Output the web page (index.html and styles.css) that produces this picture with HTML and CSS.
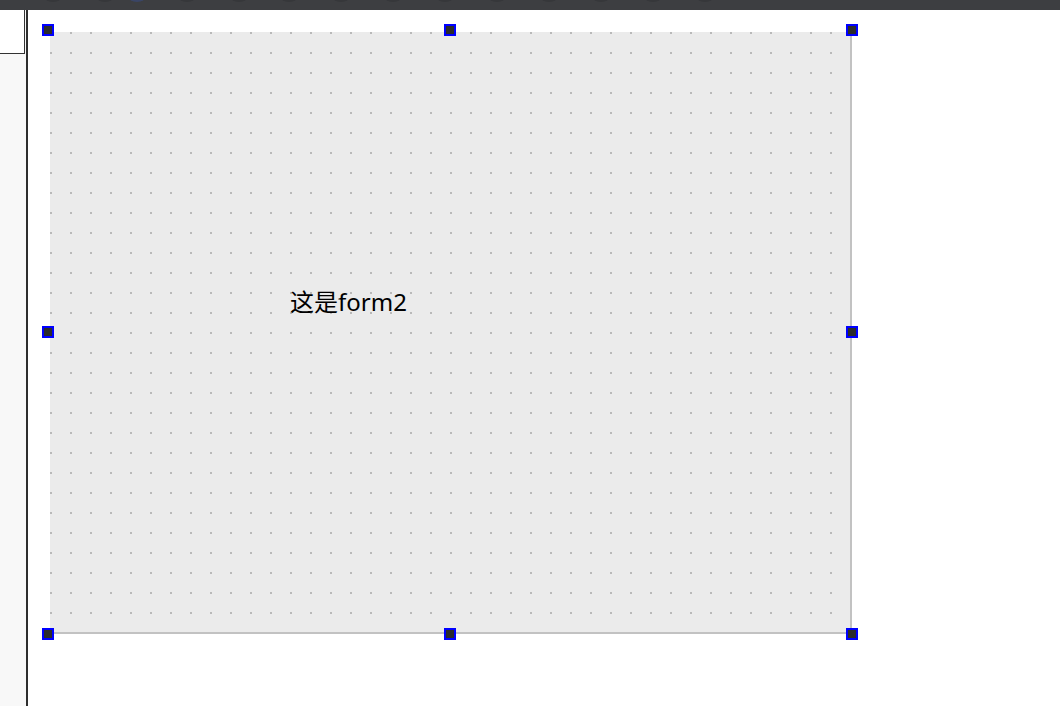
FILE: index.html
```html
<!DOCTYPE html>
<html lang="zh">
<head>
<meta charset="utf-8">
<title>form2</title>
<link rel="stylesheet" href="styles.css">
</head>
<body>
<div class="topbar">
  <span class="tb-icon" style="left:44px"></span>
  <span class="tb-icon" style="left:96px"></span>
  <span class="tb-icon blue" style="left:128px"></span>
  <span class="tb-icon" style="left:178px"></span>
  <span class="tb-icon" style="left:230px"></span>
  <span class="tb-icon" style="left:280px"></span>
  <span class="tb-icon" style="left:332px"></span>
  <span class="tb-icon" style="left:384px"></span>
  <span class="tb-icon" style="left:436px"></span>
  <span class="tb-icon" style="left:488px"></span>
  <span class="tb-icon" style="left:540px"></span>
  <span class="tb-icon" style="left:592px"></span>
  <span class="tb-icon" style="left:644px"></span>
  <span class="tb-icon" style="left:696px"></span>
</div>
<div class="main">
  <aside class="side">
    <div class="side-box"></div>
    <div class="side-rest"></div>
  </aside>
  <section class="canvas">
    <div class="selection">
      <div class="form">
        <div class="label">这是form2</div>
      </div>
      <span class="handle h-tl"></span>
      <span class="handle h-tc"></span>
      <span class="handle h-tr"></span>
      <span class="handle h-ml"></span>
      <span class="handle h-mr"></span>
      <span class="handle h-bl"></span>
      <span class="handle h-bc"></span>
      <span class="handle h-br"></span>
    </div>
  </section>
</div>
</body>
</html>
```

FILE: styles.css
```css
html, body {
  margin: 0;
  padding: 0;
  width: 1060px;
  height: 706px;
  overflow: hidden;
  background: #ffffff;
  font-family: "Noto Sans", "Noto Sans CJK SC", sans-serif;
}

.topbar {
  position: relative;
  height: 10px;
  background: #3d3e41;
  overflow: hidden;
}

.tb-icon {
  position: absolute;
  top: -10px;
  width: 18px;
  height: 12px;
  border-radius: 50%;
  background: #36373a;
}

.tb-icon.blue {
  background: #3a4566;
}

.main {
  display: flex;
  height: 696px;
}

.side {
  width: 26px;
  border-right: 2px solid #2e2e2e;
  display: flex;
  flex-direction: column;
  background: #f7f7f7;
}

.side-box {
  height: 43px;
  width: 24px;
  background: #ffffff;
  border-right: 1px solid #333333;
  border-bottom: 1px solid #333333;
}

.side-rest {
  flex: 1;
  background: #f8f8f8;
}

.canvas {
  flex: 1;
  padding: 20px 0 0 20px;
  background: #ffffff;
}

.selection {
  position: relative;
  width: 804px;
  height: 604px;
  display: flex;
  padding: 2px 0 0 2px;
  box-sizing: border-box;
}

.form {
  position: relative;
  width: 800px;
  height: 600px;
  border-right: 2px solid #c2c2c2;
  border-bottom: 2px solid #c2c2c2;
  background-color: #ebebeb;
  background-image: conic-gradient(at 2px 2px, transparent 75%, #b9b9b9 0);
  background-size: 20px 20px;
  background-position: 0 0;
}

.label {
  position: absolute;
  left: 240px;
  top: 255px;
  font-size: 24px;
  line-height: 30px;
  color: #000000;
  white-space: nowrap;
}

.handle {
  position: absolute;
  width: 8px;
  height: 8px;
  background: #2b2b2b;
  border: 2px solid #0000ff;
}

.h-tl { left: -6px; top: -6px; }
.h-tc { left: 396px; top: -6px; }
.h-tr { left: 798px; top: -6px; }
.h-ml { left: -6px; top: 296px; }
.h-mr { left: 798px; top: 296px; }
.h-bl { left: -6px; top: 598px; }
.h-bc { left: 396px; top: 598px; }
.h-br { left: 798px; top: 598px; }
```
